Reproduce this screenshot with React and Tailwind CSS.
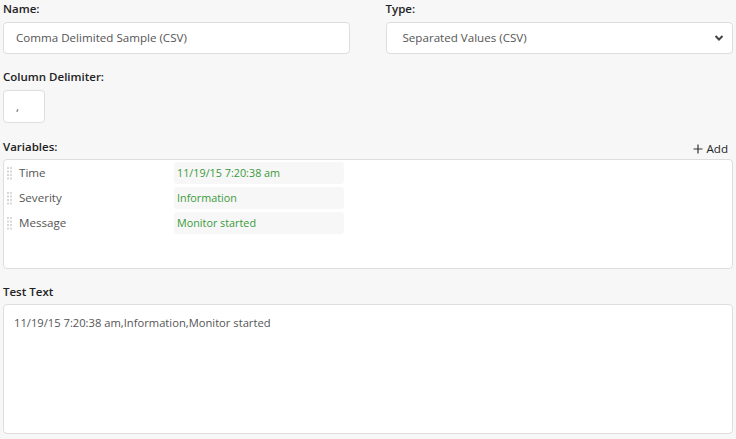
import React from "react";

const vars = [
  { name: "Time", value: "11/19/15 7:20:38 am" },
  { name: "Severity", value: "Information" },
  { name: "Message", value: "Monitor started" },
];

const Grip = () => (
  <svg width="6" height="14" viewBox="0 0 6 14" className="shrink-0">
    {[0, 1, 2, 3].map((r) =>
      [0, 1].map((c) => (
        <rect key={`${r}-${c}`} x={c * 3} y={r * 3.5 + 1} width="2" height="2" fill="#d8d8d8" />
      ))
    )}
  </svg>
);

const Label = ({ children, mb = "mb-[5px]" }) => (
  <label className={`block text-[11.5px] font-semibold text-[#222] leading-[16px] ${mb}`}>{children}</label>
);

const App = () => {
  return (
    <div
      className="w-[736px] h-[439px] bg-[#f7f7f7] overflow-hidden px-[3px] pt-[1px]"
      style={{ fontFamily: "'Open Sans', 'Noto Sans', sans-serif" }}
    >
      <div className="flex gap-[36px]">
        <div className="w-[347px]">
          <Label>Name:</Label>
          <div className="h-[32px] bg-white border border-[#dedede] rounded-[4px] flex items-center pl-[12px] text-[11.6px] text-[#555]">
            Comma Delimited Sample (CSV)
          </div>
        </div>
        <div className="w-[348px]">
          <Label>Type:</Label>
          <div className="h-[32px] bg-white border border-[#dedede] rounded-[4px] flex items-center justify-between pl-[16px] pr-[8px] text-[11.6px] text-[#555]">
            <span>Separated Values (CSV)</span>
            <svg width="10" height="8" viewBox="0 0 10 8">
              <path d="M1.5 2 L5 5.5 L8.5 2" stroke="#444" strokeWidth="2" fill="none" />
            </svg>
          </div>
        </div>
      </div>

      <div className="mt-[15px]">
        <Label>Column Delimiter:</Label>
        <div className="w-[42px] h-[33px] bg-white border border-[#dedede] rounded-[4px] flex items-center pl-[12px] text-[11.6px] text-[#555]">
          ,
        </div>
      </div>

      <div className="mt-[16px]">
        <div className="flex items-end justify-between">
          <Label mb="mb-[4px]">Variables:</Label>
          <button className="flex items-center gap-[3px] text-[11.6px] text-[#222] mr-[5px] mb-[2px] leading-[16px]">
            <svg width="10" height="10" viewBox="0 0 10 10">
              <path d="M5 0.5 V9.5 M0.5 5 H9.5" stroke="#333" strokeWidth="1.2" />
            </svg>
            Add
          </button>
        </div>
        <div className="h-[110px] bg-white border border-[#dedede] rounded-[4px] pt-[2px] pl-[3px] flex flex-col gap-[3px]">
          {vars.map((v) => (
            <div key={v.name} className="flex items-center h-[22px]">
              <Grip />
              <span className="w-[161px] pl-[6px] text-[11.6px] text-[#555]">{v.name}</span>
              <span className="w-[170px] h-[22px] bg-[#f7f7f7] rounded-[3px] flex items-center pl-[3px] text-[10.8px] text-[#3a9a3a]">
                {v.value}
              </span>
            </div>
          ))}
        </div>
      </div>

      <div className="mt-[15px]">
        <Label mb="mb-[4px]">Test Text</Label>
        <div className="h-[130px] bg-white border border-[#dedede] rounded-[4px] px-[10px] pt-[10px] text-[11.2px] text-[#555]">
          11/19/15 7:20:38 am,Information,Monitor started
        </div>
      </div>
    </div>
  );
};

export default App;
